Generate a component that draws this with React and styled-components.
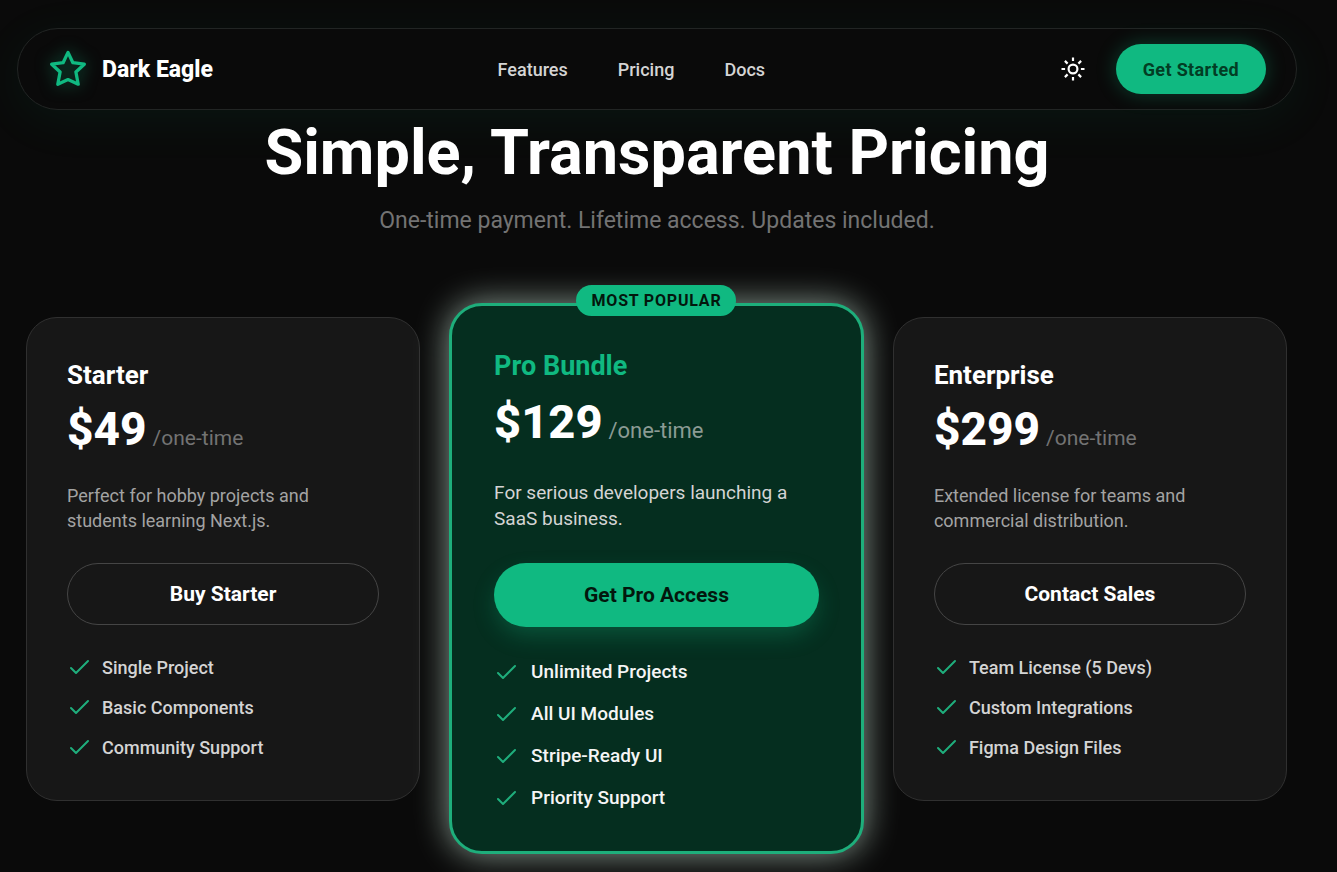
import styled, { createGlobalStyle, css } from "styled-components";

const GlobalStyle = createGlobalStyle`
  * {
    box-sizing: border-box;
  }

  body {
    margin: 0;
    background: #0a0a0a;
    color: #fff;
    font-family: Roboto, "Liberation Sans", sans-serif;
  }

  h1, h2, p, ul {
    margin: 0;
    padding: 0;
  }

  button {
    font-family: inherit;
    cursor: pointer;
  }
`;

const Page = styled.div`
  min-height: 100vh;
  padding: 28px 40px 18px 17px;
  overflow: hidden;
`;

const Navbar = styled.header`
  display: flex;
  align-items: center;
  justify-content: space-between;
  padding: 15px 30px 15px 32px;
  border: 1px solid #222524;
  border-radius: 41px;
  background: #0a0a0a;
  box-shadow: 0 10px 50px rgba(16, 185, 129, 0.07);
`;

const Brand = styled.a`
  display: flex;
  align-items: center;
  gap: 16px;
  color: #fff;
  font-size: 23px;
  font-weight: 800;
  text-decoration: none;

  svg {
    filter: drop-shadow(0 0 8px rgba(16, 185, 129, 0.5));
  }
`;

const NavLinks = styled.nav`
  display: flex;
  gap: 50px;

  a {
    color: #d4d4d4;
    font-size: 18px;
    font-weight: 500;
    text-decoration: none;
  }
`;

const Actions = styled.div`
  display: flex;
  align-items: center;
  gap: 20px;
`;

const ThemeButton = styled.button`
  display: flex;
  align-items: center;
  justify-content: center;
  width: 46px;
  height: 46px;
  padding: 0;
  border: 0;
  background: transparent;
  color: #fff;
`;

const StartButton = styled.button`
  height: 50px;
  padding: 0 27px;
  border: 0;
  border-radius: 25px;
  background: #10b981;
  color: #023d24;
  font-size: 18px;
  font-weight: 700;
  letter-spacing: 0.02em;
  box-shadow: 0 0 20px rgba(16, 185, 129, 0.3);
`;

const Hero = styled.section`
  padding: 8px 0 64px;
  text-align: center;
`;

const Heading = styled.h1`
  font-size: 63px;
  line-height: 70px;
  font-weight: 700;
`;

const Lead = styled.p`
  margin-top: 15px;
  color: #737373;
  font-size: 23px;
  line-height: 36px;
`;

const Plans = styled.main`
  display: grid;
  grid-template-columns: 19fr 20fr 19fr;
  align-items: start;
  gap: 29px;
  padding: 0 10px 0 9px;
`;

const Card = styled.article`
  position: relative;
  margin-top: 14px;
  padding: 40px;
  border: 1px solid #303030;
  border-radius: 31px;
  background: #171717;

  ${(props) =>
    props.$featured &&
    css`
      margin-top: 0;
      padding: 42px 42px 40px;
      border: 3px solid #1eae7b;
      border-radius: 33px;
      background: #052e1f;
      box-shadow: 0 0 34px rgba(225, 255, 238, 0.6);
    `}
`;

const Badge = styled.span`
  position: absolute;
  top: -21px;
  left: 50%;
  padding: 0 15px;
  border-radius: 16px;
  background: #10b981;
  color: #03170d;
  font-size: 16px;
  line-height: 31px;
  font-weight: 700;
  letter-spacing: 0.05em;
  white-space: nowrap;
  transform: translateX(-50%);
`;

const PlanName = styled.h2`
  color: ${(props) => (props.$featured ? "#10b981" : "#fff")};
  font-size: ${(props) => (props.$featured ? "27px" : "26px")};
  line-height: ${(props) => (props.$featured ? "36px" : "34px")};
  font-weight: 700;
`;

const Price = styled.p`
  display: flex;
  align-items: baseline;
  gap: 6px;
  margin-top: 12px;
  font-size: ${(props) => (props.$featured ? "47px" : "46px")};
  line-height: ${(props) => (props.$featured ? "52px" : "50px")};
  font-weight: 800;

  span {
    color: ${(props) => (props.$featured ? "#8b9b94" : "#737373")};
    font-size: ${(props) => (props.$featured ? "22px" : "21px")};
    font-weight: 400;
  }
`;

const Description = styled.p`
  margin-top: ${(props) => (props.$featured ? "23px" : "20px")};
  color: ${(props) => (props.$featured ? "#d4d4d4" : "#a3a3a3")};
  font-size: ${(props) => (props.$featured ? "19px" : "18px")};
  line-height: ${(props) => (props.$featured ? "26px" : "25px")};
`;

const BuyButton = styled.button`
  width: 100%;
  height: 62px;
  margin: 30px 0;
  border: 1px solid #454545;
  border-radius: 32px;
  background: transparent;
  color: #fff;
  font-size: 21px;
  font-weight: 700;

  ${(props) =>
    props.$featured &&
    css`
      height: 64px;
      margin: 31px 0 32px;
      border: 0;
      background: #10b981;
      color: #03170d;
      box-shadow: 0 10px 24px -3px rgba(16, 185, 129, 0.3);
    `}
`;

const Features = styled.ul`
  display: grid;
  gap: ${(props) => (props.$featured ? "16px" : "15px")};
  list-style: none;

  li {
    display: flex;
    align-items: center;
    gap: ${(props) => (props.$featured ? "12px" : "10px")};
    color: ${(props) => (props.$featured ? "#f5f5f5" : "#d4d4d4")};
    font-size: ${(props) => (props.$featured ? "19px" : "18px")};
    line-height: ${(props) => (props.$featured ? "26px" : "25px")};
    font-weight: 500;
  }
`;

const StarIcon = () => (
  <svg width="36" height="38" viewBox="0 0 36 38" fill="none" aria-hidden="true">
    <path
      d="M18 2.4l4.9 10.3 11.4 1.5-8.4 7.8 2.3 12.2L18 29.6 7.8 34.2l2.3-12.2-8.4-7.8 11.4-1.5z"
      stroke="#10b981"
      strokeWidth="3.3"
      strokeLinejoin="round"
    />
  </svg>
);

const SunIcon = () => (
  <svg
    width="24"
    height="24"
    viewBox="0 0 24 24"
    fill="none"
    stroke="currentColor"
    strokeWidth="2.2"
    aria-hidden="true"
  >
    <circle cx="12" cy="12" r="4.4" />
    <path d="M12 .5v3.6M12 19.9v3.6M.5 12h3.6M19.9 12h3.6M3.9 3.9l2.7 2.7M17.4 17.4l2.7 2.7M3.9 20.1l2.7-2.7M17.4 6.6l2.7-2.7" />
  </svg>
);

const CheckIcon = () => (
  <svg width="25" height="25" viewBox="0 0 25 25" fill="none" aria-hidden="true">
    <path
      d="M4 13l5 5L21 6"
      stroke="#1fae7c"
      strokeWidth="2"
      strokeLinecap="round"
      strokeLinejoin="round"
    />
  </svg>
);

const plans = [
  {
    name: "Starter",
    price: "$49",
    description: "Perfect for hobby projects and students learning Next.js.",
    action: "Buy Starter",
    features: ["Single Project", "Basic Components", "Community Support"],
  },
  {
    name: "Pro Bundle",
    price: "$129",
    description: "For serious developers launching a SaaS business.",
    action: "Get Pro Access",
    features: [
      "Unlimited Projects",
      "All UI Modules",
      "Stripe-Ready UI",
      "Priority Support",
    ],
    featured: true,
  },
  {
    name: "Enterprise",
    price: "$299",
    description: "Extended license for teams and commercial distribution.",
    action: "Contact Sales",
    features: [
      "Team License (5 Devs)",
      "Custom Integrations",
      "Figma Design Files",
    ],
  },
];

const Plan = ({ plan }) => (
  <Card $featured={plan.featured}>
    {plan.featured && <Badge>MOST POPULAR</Badge>}
    <PlanName $featured={plan.featured}>{plan.name}</PlanName>
    <Price $featured={plan.featured}>
      {plan.price}
      <span>/one-time</span>
    </Price>
    <Description $featured={plan.featured}>{plan.description}</Description>
    <BuyButton type="button" $featured={plan.featured}>
      {plan.action}
    </BuyButton>
    <Features $featured={plan.featured}>
      {plan.features.map((feature) => (
        <li key={feature}>
          <CheckIcon />
          {feature}
        </li>
      ))}
    </Features>
  </Card>
);

const App = () => (
  <>
    <GlobalStyle />
    <Page>
      <Navbar>
        <Brand href="#">
          <StarIcon />
          Dark Eagle
        </Brand>
        <NavLinks>
          <a href="#features">Features</a>
          <a href="#pricing">Pricing</a>
          <a href="#docs">Docs</a>
        </NavLinks>
        <Actions>
          <ThemeButton type="button" aria-label="Toggle theme">
            <SunIcon />
          </ThemeButton>
          <StartButton type="button">Get Started</StartButton>
        </Actions>
      </Navbar>
      <Hero>
        <Heading>Simple, Transparent Pricing</Heading>
        <Lead>One-time payment. Lifetime access. Updates included.</Lead>
      </Hero>
      <Plans>
        {plans.map((plan) => (
          <Plan key={plan.name} plan={plan} />
        ))}
      </Plans>
    </Page>
  </>
);

export default App;
